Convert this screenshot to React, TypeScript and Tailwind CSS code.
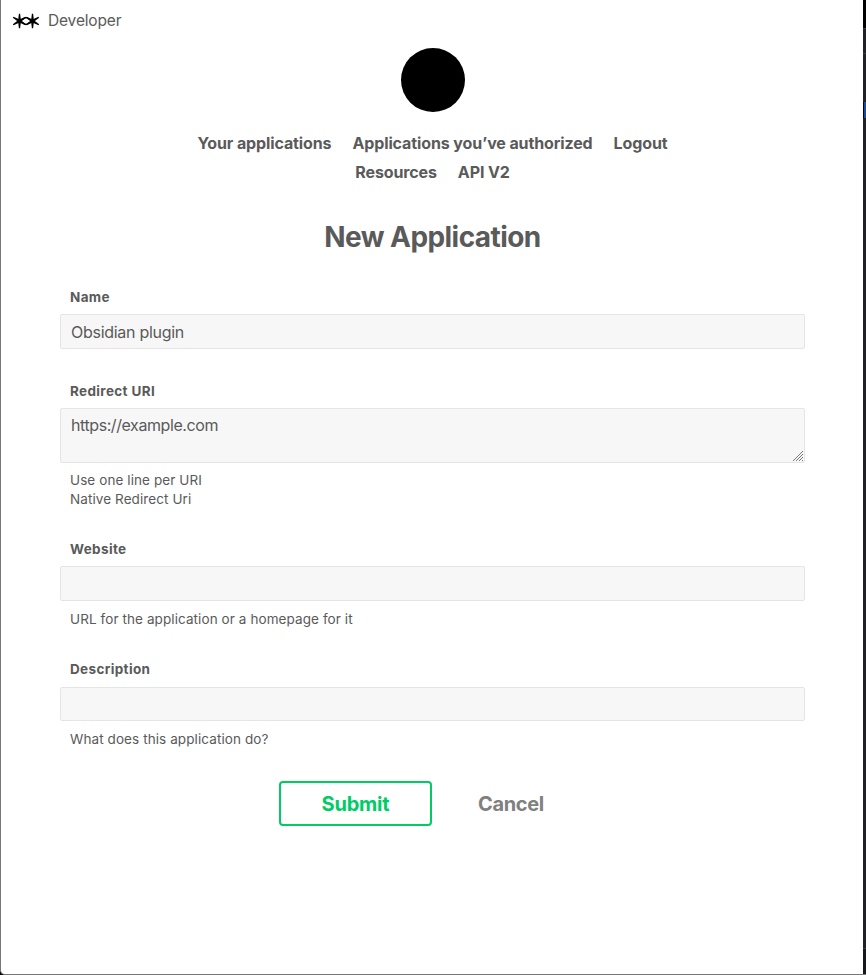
import React from "react";

const fieldBox = "block w-[745px] rounded-[2px] border border-[#e5e5e5] bg-[#f7f7f7] px-[10px] text-[16px] text-[#5a5a5a] outline-none";

function Label({ children }: { children: React.ReactNode }) {
  return <span className="block pl-[10px] text-[13.5px] leading-[20px] font-bold tracking-[0.36px]">{children}</span>;
}

function Hint({ children }: { children: React.ReactNode }) {
  return <p className="pl-[10px] text-[13.5px] leading-[19px] tracking-[0.09px]">{children}</p>;
}

function Logo() {
  return (
    <svg width="28" height="18" viewBox="0 0 28 18" className="block" fill="#000">
      {[7.5, 20.5].map((x) => (
        <g key={x} transform={`translate(${x} 9)`}>
          <path d="M-0.6 -7.3H0.6L1.5 0L0.6 7.3H-0.6L-1.5 0Z" />
          <path d="M-0.6 -7.3H0.6L1.5 0L0.6 7.3H-0.6L-1.5 0Z" transform="rotate(60)" />
          <path d="M-0.6 -7.3H0.6L1.5 0L0.6 7.3H-0.6L-1.5 0Z" transform="rotate(-60)" />
        </g>
      ))}
      <path d="M10.5 7.4Q14 3.7 17.5 7.4M10.5 10.6Q14 14.3 17.5 10.6" fill="none" stroke="#000" strokeWidth="1.2" />
    </svg>
  );
}

function ResizeGrip() {
  return (
    <svg width="10" height="10" viewBox="0 0 10 10" className="pointer-events-none absolute right-[2px] bottom-[2px]" shapeRendering="crispEdges">
      {Array.from({ length: 10 }, (_, i) => (
        <rect key={`a${i}`} x={i} y={9 - i} width="1" height="1" fill="#777" />
      ))}
      {Array.from({ length: 7 }, (_, i) => (
        <rect key={`b${i}`} x={3 + i} y={9 - i} width="1" height="1" fill="#777" />
      ))}
      {Array.from({ length: 4 }, (_, i) => (
        <rect key={`c${i}`} x={6 + i} y={9 - i} width="1" height="1" fill="#777" />
      ))}
      <rect x="9" y="9" width="1" height="1" fill="#777" />
    </svg>
  );
}

export default function App() {
  return (
    <div className="flex h-[975px] w-[866px] overflow-hidden bg-black font-['Inter','Liberation_Sans',sans-serif] text-[#5a5a5a]">
      <div className="flex h-[975px] w-[863px] shrink-0 flex-col rounded-bl-[5px] border-b border-l border-[#777] bg-white">
        <header className="flex h-[41px] shrink-0 items-center pl-[11px]">
          <Logo />
          <span className="ml-[8px] text-[15.5px] leading-[20px] tracking-[-0.15px]">Developer</span>
        </header>
        <div className="ml-[400px] mt-[7px] h-[64px] w-[64px] shrink-0 rounded-full bg-black" />
        <nav className="mt-[17px] flex flex-col items-center pl-px text-[16px] leading-[29px] font-bold tracking-[-0.12px]">
          <div className="flex gap-[21px]">
            <a>Your applications</a>
            <a>Applications you’ve authorized</a>
            <a>Logout</a>
          </div>
          <div className="flex gap-[21px]">
            <a>Resources</a>
            <a>API V2</a>
          </div>
        </nav>
        <h1 className="mt-[30px] pl-[1px] text-center text-[28px] leading-[40px] font-bold tracking-[-0.56px]">New Application</h1>
        <form className="ml-[59px] mt-[30px] w-[745px]">
          <Label>Name</Label>
          <input className={`${fieldBox} mt-[7px] h-[35px] tracking-[-0.28px]`} defaultValue="Obsidian plugin" />
          <div className="mt-[32px]">
            <Label>Redirect URI</Label>
            <div className="relative mt-[7px]">
              <textarea className={`${fieldBox} h-[55px] resize-none py-[6px] leading-[21px] tracking-[-0.42px]`} defaultValue="https://example.com" />
              <ResizeGrip />
            </div>
            <div className="mt-[8px]">
              <Hint>Use one line per URI</Hint>
              <Hint>Native Redirect Uri</Hint>
            </div>
          </div>
          <div className="mt-[30px]">
            <Label>Website</Label>
            <input className={`${fieldBox} mt-[7px] mb-[9px] h-[35px]`} />
            <Hint>URL for the application or a homepage for it</Hint>
          </div>
          <div className="mt-[30px]">
            <Label>Description</Label>
            <input className={`${fieldBox} mt-[8px] mb-[9px] h-[34px]`} />
            <Hint>What does this application do?</Hint>
          </div>
          <div className="mt-[32px] flex h-[45px] items-center pl-[219px]">
            <button type="button" className="h-[45px] w-[153px] rounded-[4px] border-2 border-[#00cc66] text-[20px] font-bold tracking-[-0.2px] text-[#00cc66]">Submit</button>
            <a className="ml-[46px] text-[20px] font-bold tracking-[-0.35px] text-[#808080]">Cancel</a>
          </div>
        </form>
      </div>
      <div className="flex w-[3px] flex-col">
        <div className="h-[28px] bg-black" />
        <div className="h-px bg-[#3a3a3e]" />
        <div className="h-[24px] bg-[#202124]" />
        <div className="h-px bg-[#3a3a3e]" />
        <div className="h-[48px] bg-[#202124]" />
        <div className="ml-px h-[16px] bg-[#1d4c91]" />
        <div className="h-[830px] bg-[#202124]" />
        <div className="h-px bg-[#3a3a3e]" />
        <div className="h-[25px] bg-[#17181c]" />
        <div className="h-px bg-[#777]" />
      </div>
    </div>
  );
}
